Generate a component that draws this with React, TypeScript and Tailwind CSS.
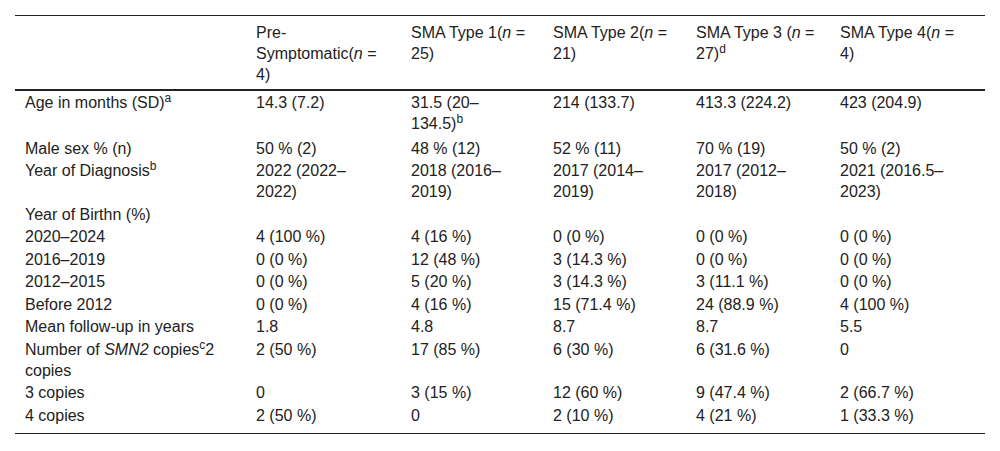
import React from 'react';

type Cell = React.ReactNode;

const n = <i>n</i>;

type Row = { cells: Cell[]; extra?: string };

const header: Cell[] = [
  '',
  <>Pre-<br />Symptomatic({n} =<br />4)</>,
  <>SMA Type 1({n} =<br />25)</>,
  <>SMA Type 2({n} =<br />21)</>,
  <>SMA Type 3 ({n} =<br />27)<sup>d</sup></>,
  <>SMA Type 4({n} =<br />4)</>,
];

const rows: Row[] = [
  { cells: [<>Age in months (SD)<sup>a</sup></>, '14.3 (7.2)', <>31.5 (20–<br />134.5)<sup>b</sup></>, '214 (133.7)', '413.3 (224.2)', '423 (204.9)'], extra: 'pb-[2.5px]' },
  { cells: ['Male sex % (n)', '50 % (2)', '48 % (12)', '52 % (11)', '70 % (19)', '50 % (2)'] },
  { cells: [<>Year of Diagnosis<sup>b</sup></>, <>2022 (2022–<br />2022)</>, <>2018 (2016–<br />2019)</>, <>2017 (2014–<br />2019)</>, <>2017 (2012–<br />2018)</>, <>2021 (2016.5–<br />2023)</>], extra: 'pt-[3px]' },
  { cells: ['Year of Birthn (%)', '', '', '', '', ''] },
  { cells: ['2020–2024', '4 (100 %)', '4 (16 %)', '0 (0 %)', '0 (0 %)', '0 (0 %)'] },
  { cells: ['2016–2019', '0 (0 %)', '12 (48 %)', '3 (14.3 %)', '0 (0 %)', '0 (0 %)'] },
  { cells: ['2012–2015', '0 (0 %)', '5 (20 %)', '3 (14.3 %)', '3 (11.1 %)', '0 (0 %)'] },
  { cells: ['Before 2012', '0 (0 %)', '4 (16 %)', '15 (71.4 %)', '24 (88.9 %)', '4 (100 %)'] },
  { cells: ['Mean follow-up in years', '1.8', '4.8', '8.7', '8.7', '5.5'] },
  { cells: [<>Number of <i>SMN2</i> copies<sup>c</sup>2<br />copies</>, '2 (50 %)', '17 (85 %)', '6 (30 %)', '6 (31.6 %)', '0'], extra: 'pt-[2px]' },
  { cells: ['3 copies', '0', '3 (15 %)', '12 (60 %)', '9 (47.4 %)', '2 (66.7 %)'], extra: 'pt-[2.5px]' },
  { cells: ['4 copies', '2 (50 %)', '0', '2 (10 %)', '4 (21 %)', '1 (33.3 %)'], extra: 'pb-[7px]' },
];

export default function App() {
  return (
    <div className="bg-white w-[1000px] h-[451px] px-[15px] pt-[15px] font-['Liberation_Sans',Arial,sans-serif] text-[16px] leading-[21px] text-[#222]">
      <table className="w-full table-fixed border-collapse text-left">
        <colgroup>
          <col className="w-[231px]" />
          <col className="w-[155px]" />
          <col className="w-[142px]" />
          <col className="w-[143px]" />
          <col className="w-[144px]" />
          <col className="w-[155px]" />
        </colgroup>
        <thead className="border-t border-[#222]">
          <tr className="border-b-2 border-[#222]">
            {header.map((h, i) => (
              <th key={i} className="pl-[10px] pr-2 pt-[6px] pb-[4px] font-normal align-top whitespace-nowrap">
                {h}
              </th>
            ))}
          </tr>
        </thead>
        <tbody className="border-b border-[#222]">
          {rows.map((r, ri) => (
            <tr key={ri}>
              {r.cells.map((c, ci) => (
                <td key={ci} className={`pl-[10px] pr-2 pt-px pb-[0.5px] align-top whitespace-nowrap ${r.extra ?? ''}`}>
                  {c}
                </td>
              ))}
            </tr>
          ))}
        </tbody>
      </table>
    </div>
  );
}
